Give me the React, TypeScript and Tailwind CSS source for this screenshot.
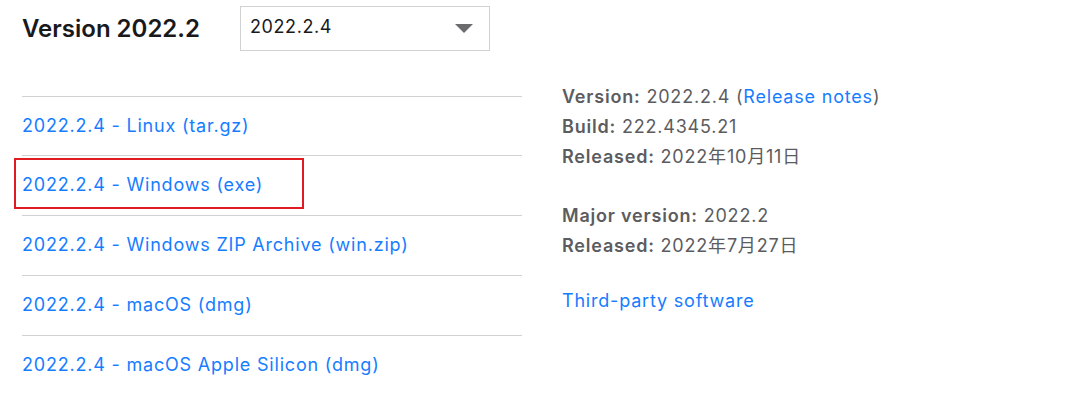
import React from 'react';

const downloads = [
    '2022.2.4 - Linux (tar.gz)',
    '2022.2.4 - Windows (exe)',
    '2022.2.4 - Windows ZIP Archive (win.zip)',
    '2022.2.4 - macOS (dmg)',
    '2022.2.4 - macOS Apple Silicon (dmg)',
];

const font = { fontFamily: 'Inter, "Noto Sans CJK SC", sans-serif' };

const App: React.FC = () => {
    return (
        <div className="w-[1085px] h-[403px] bg-white pl-[22px] text-[18px] tracking-[0.8px]" style={font}>
            <div className="flex items-center pt-[6px] h-[50px]">
                <h2 className="w-[218px] mt-[2px] text-[24px] font-semibold text-[#19191c] tracking-[0px]">Version 2022.2</h2>
                <div className="relative flex items-center w-[250px] h-[45px] border border-[#d1d1d2] pl-[9px] pb-[3px] text-[#19191c] tracking-[0.6px]">
                    2022.2.4
                    <svg className="absolute right-[16px] top-[17px]" width="18" height="9" viewBox="0 0 18 9">
                        <path d="M0 0 H18 L9 9 Z" fill="#6b6b6e" />
                    </svg>
                </div>
            </div>

            <div className="flex mt-[46px]">
                <ul className="w-[500px]">
                    {downloads.map((d, i) => (
                        <li
                            key={d}
                            className={`relative flex items-center border-t border-[#d1d1d2] text-[#167dff] pb-[2px] ${i === 0 ? 'h-[59px]' : 'h-[60px]'}`}
                        >
                            {d}
                            {i === 1 && (
                                <span className="absolute left-[-8px] top-[2px] w-[290px] h-[51px] border-2 border-[#e01b24]" />
                            )}
                        </li>
                    ))}
                </ul>

                <div className="ml-[40px] -mt-[14px] text-[#5c5c5f] leading-[30px]">
                    <p><span className="font-semibold">Version:</span> 2022.2.4 (<span className="text-[#167dff]">Release notes</span>)</p>
                    <p><span className="font-semibold">Build:</span> 222.4345.21</p>
                    <p><span className="font-semibold">Released:</span> 2022年10月11日</p>
                    <p className="mt-[29px]"><span className="font-semibold">Major version:</span> 2022.2</p>
                    <p><span className="font-semibold">Released:</span> 2022年7月27日</p>
                    <p className="mt-[25px] text-[#167dff]">Third-party software</p>
                </div>
            </div>
        </div>
    );
};

export default App;
